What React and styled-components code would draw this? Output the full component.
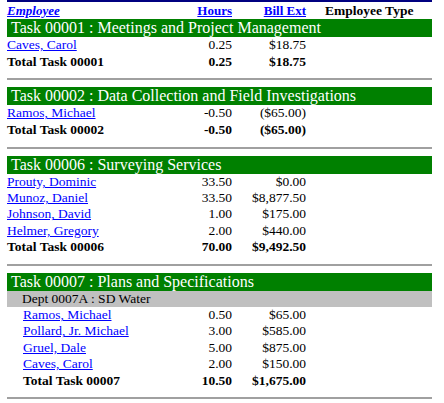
import React from 'react';
import styled, { createGlobalStyle } from 'styled-components';

const GlobalStyle = createGlobalStyle`
  html, body {
    margin: 0;
    padding: 0;
    background: #fff;
  }
  body {
    font-family: "Liberation Serif", "Times New Roman", serif;
    color: #000;
  }
`;

const Report = styled.div`
  width: 425px;
  margin: 0 0 0 7px;
  border-top: 2px solid #000080;
  font-family: "Liberation Serif", "Times New Roman", serif;
  font-size: 13.5px;
`;

const Row = styled.div`
  display: grid;
  grid-template-columns: 173px 52px 74px 1fr;
  align-items: center;
  height: ${props => props.h || 16.33}px;
  line-height: 16px;
  font-weight: ${props => (props.bold ? 'bold' : 'normal')};
`;

const HeadLink = styled.a`
  color: #0000ff;
  font-weight: bold;
  font-size: 13px;
  text-decoration: underline;
  font-style: ${props => (props.italic ? 'italic' : 'normal')};
  justify-self: ${props => props.align || 'start'};
`;

const HeadText = styled.span`
  font-weight: bold;
  padding-left: 19px;
`;

const Cell = styled.span`
  padding-left: ${props => (props.indent ? 16 : 0)}px;
  white-space: nowrap;
`;

const Name = styled.a`
  color: #0000ff;
  text-decoration: underline;
  white-space: nowrap;
`;

const Num = styled.span`
  text-align: right;
  white-space: nowrap;
`;

const TaskBar = styled.div`
  background: #008000;
  color: #fff;
  height: 18px;
  line-height: 18px;
  font-size: 16px;
  padding-left: 4px;
  white-space: nowrap;
`;

const DeptBar = styled.div`
  background: #c0c0c0;
  color: #000;
  height: 16px;
  line-height: 16px;
  font-size: 13.5px;
  padding-left: 15px;
`;

const Rule = styled.hr`
  border: 0;
  border-top: 2px solid #a0a0a0;
  height: 0;
  margin: 8px 0 7px;
`;

const Section = styled.section``;

const tasks = [
  {
    id: '00001',
    title: 'Meetings and Project Management',
    rows: [['Caves, Carol', '0.25', '$18.75']],
    total: ['0.25', '$18.75'],
  },
  {
    id: '00002',
    title: 'Data Collection and Field Investigations',
    rows: [['Ramos, Michael', '-0.50', '($65.00)']],
    total: ['-0.50', '($65.00)'],
  },
  {
    id: '00006',
    title: 'Surveying Services',
    rows: [
      ['Prouty, Dominic', '33.50', '$0.00'],
      ['Munoz, Daniel', '33.50', '$8,877.50'],
      ['Johnson, David', '1.00', '$175.00'],
      ['Helmer, Gregory', '2.00', '$440.00'],
    ],
    total: ['70.00', '$9,492.50'],
  },
  {
    id: '00007',
    title: 'Plans and Specifications',
    dept: 'Dept 0007A : SD Water',
    rows: [
      ['Ramos, Michael', '0.50', '$65.00'],
      ['Pollard, Jr. Michael', '3.00', '$585.00'],
      ['Gruel, Dale', '5.00', '$875.00'],
      ['Caves, Carol', '2.00', '$150.00'],
    ],
    total: ['10.50', '$1,675.00'],
  },
];

export default function App() {
  return (
    <Report>
      <GlobalStyle />
      <Row h={17}>
        <HeadLink italic href="#">Employee</HeadLink>
        <HeadLink align="end" href="#">Hours</HeadLink>
        <HeadLink align="end" href="#">Bill Ext</HeadLink>
        <HeadText>Employee Type</HeadText>
      </Row>
      {tasks.map(task => (
        <Section key={task.id}>
          <TaskBar>Task {task.id} : {task.title}</TaskBar>
          {task.dept && <DeptBar>{task.dept}</DeptBar>}
          {task.rows.map(([name, hours, bill]) => (
            <Row key={name}>
              <Cell indent={!!task.dept}>
                <Name href="#">{name}</Name>
              </Cell>
              <Num>{hours}</Num>
              <Num>{bill}</Num>
              <span />
            </Row>
          ))}
          <Row bold h={17}>
            <Cell indent={!!task.dept}>Total Task {task.id}</Cell>
            <Num>{task.total[0]}</Num>
            <Num>{task.total[1]}</Num>
            <span />
          </Row>
          <Rule />
        </Section>
      ))}
    </Report>
  );
}
